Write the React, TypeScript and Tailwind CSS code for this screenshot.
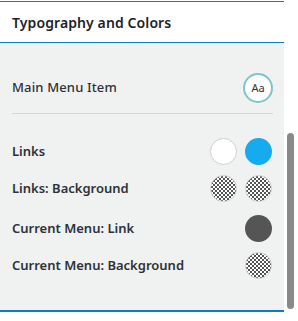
import React from 'react';

function Checker() {
  return (
    <span className="block w-[27px] h-[27px] rounded-full border border-[#d0d0d0] bg-[repeating-conic-gradient(#555_0_25%,#fff_0_50%)] bg-[length:4px_4px]" />
  );
}

function Swatch({ color }: { color: string }) {
  return <span className={`block w-[27px] h-[27px] rounded-full ${color}`} />;
}

export default function App() {
  return (
    <div className="w-[298px] h-[321px] bg-white flex overflow-hidden" style={{ fontFamily: '"Noto Sans", "Open Sans", sans-serif' }}>
      <div className="w-[284px] flex flex-col">
        <div className="mt-px border-t border-b border-[#0a7cc2] h-[42px] flex items-center px-3">
          <h2 className="text-[14px] font-semibold text-[#1d2327] tracking-[0.1px]">Typography and Colors</h2>
        </div>
        <div className="bg-[#f0f1f1] h-[269px] border-b-2 border-[#0a7cc2] px-3 pt-[28px]">
          {/* Main Menu Item */}
          <div className="flex items-center justify-between h-[34px]">
            <span className="text-[13px] font-medium text-[#2c3338] tracking-[0.15px]">Main Menu Item</span>
            <span className="w-[30px] h-[30px] rounded-full border-2 border-[#7cc6ca] bg-white flex items-center justify-center text-[11px] text-[#333] mr-[-1px]">Aa</span>
          </div>
          <div className="mt-[8px] h-px bg-[#d6d8d8] mr-[-1px]" />
          <div className="flex flex-col mt-[24px] gap-[10px]">
            <div className="flex items-center justify-between h-[27px]">
              <span className="text-[13px] font-semibold text-[#2c3338]">Links</span>
              <div className="flex gap-2">
                <span className="block w-[27px] h-[27px] rounded-full bg-white border border-[#d0d0d0]" />
                <Swatch color="bg-[#16aaef]" />
              </div>
            </div>
            <div className="flex items-center justify-between h-[27px]">
              <span className="text-[13px] font-semibold text-[#2c3338]">Links: Background</span>
              <div className="flex gap-2">
                <Checker />
                <Checker />
              </div>
            </div>
            <div className="flex items-center justify-between h-[27px] mt-[3px]">
              <span className="text-[13px] font-semibold text-[#2c3338]">Current Menu: Link</span>
              <Swatch color="bg-[#555555]" />
            </div>
            <div className="flex items-center justify-between h-[27px]">
              <span className="text-[13px] font-semibold text-[#2c3338]">Current Menu: Background</span>
              <Checker />
            </div>
          </div>
        </div>
      </div>
      <div className="flex-1 relative">
        <div className="absolute left-[3px] w-[7px] top-[133px] h-[176px] rounded-full bg-[#8a8a8a]" />
      </div>
    </div>
  );
}
